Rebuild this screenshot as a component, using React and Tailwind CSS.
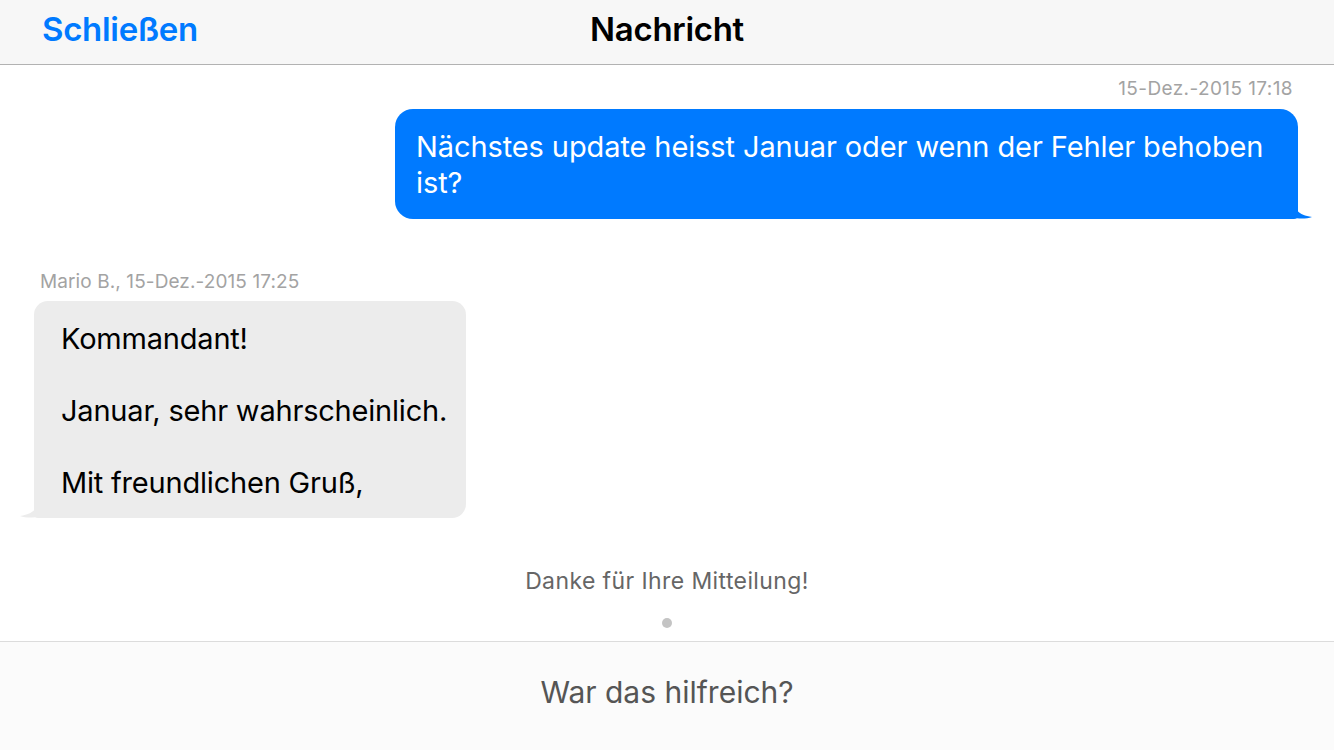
export default function App() {
  const font = { fontFamily: 'Inter, "Noto Sans", sans-serif' };
  return (
    <div className="w-[1334px] h-[750px] flex flex-col bg-white overflow-hidden" style={font}>
      <header className="h-[65px] shrink-0 bg-[#f7f7f7] border-b border-[#b2b2b2] grid grid-cols-[1fr_auto_1fr] items-center px-[42px] pb-[4px]">
        <span className="text-[#007aff] text-[33px] font-semibold tracking-[-0.3px]">Schließen</span>
        <span className="text-black text-[33px] font-semibold tracking-[-0.3px]">Nachricht</span>
        <span />
      </header>
      <main className="flex-1 flex flex-col">
        <div className="text-right pr-[41px] pt-[13px] text-[#a3a3a3] text-[19px] leading-[22px] tracking-[0.4px]">15-Dez.-2015 17:18</div>
        <div className="flex justify-end pr-[36px] pt-[9px]">
          <div className="relative w-[903px] h-[110px] bg-[#007aff] rounded-[18px] rounded-br-[4px] pl-[21px] pr-[16px] pt-[20px] text-white text-[29px] leading-[36px] tracking-[-0.1px]">
            Nächstes update heisst Januar oder wenn der Fehler behoben ist?
            <svg className="absolute right-[-14px] bottom-0" width="20" height="22" viewBox="0 0 20 22">
              <path d="M0 0 C2 12 6 18 20 20 C14 22 6 22 0 20 Z" fill="#007aff" />
            </svg>
          </div>
        </div>
        <div className="pl-[40px] pt-[52px] text-[#a3a3a3] text-[19px] leading-[22px] tracking-[0.1px]">Mario B., 15-Dez.-2015 17:25</div>
        <div className="pl-[34px] pt-[8px]">
          <div className="relative w-[432px] h-[217px] bg-[#ececec] rounded-[14px] rounded-bl-[4px] pl-[27px] pt-[20px] text-black text-[29px] leading-[36px] tracking-[-0.2px]">
            <div>Kommandant!</div>
            <div className="h-[36px]" />
            <div>Januar, sehr wahrscheinlich.</div>
            <div className="h-[36px]" />
            <div>Mit freundlichen Gruß,</div>
            <svg className="absolute left-[-14px] bottom-0" width="20" height="22" viewBox="0 0 20 22">
              <path d="M20 0 C18 12 14 18 0 20 C6 22 14 22 20 20 Z" fill="#ececec" />
            </svg>
          </div>
        </div>
        <div className="mt-[49px] text-center text-[#666666] text-[23px] leading-[28px] tracking-[0.4px]">Danke für Ihre Mitteilung!</div>
        <div className="flex justify-center pt-[23px]">
          <div className="w-[10px] h-[10px] rounded-full bg-[#c4c4c4]" />
        </div>
      </main>
      <footer className="h-[109px] shrink-0 bg-[#fbfbfb] border-t border-[#dcdcdc] flex items-center justify-center pb-[8px] text-[#555555] text-[30px]">
        War das hilfreich?
      </footer>
    </div>
  );
}
